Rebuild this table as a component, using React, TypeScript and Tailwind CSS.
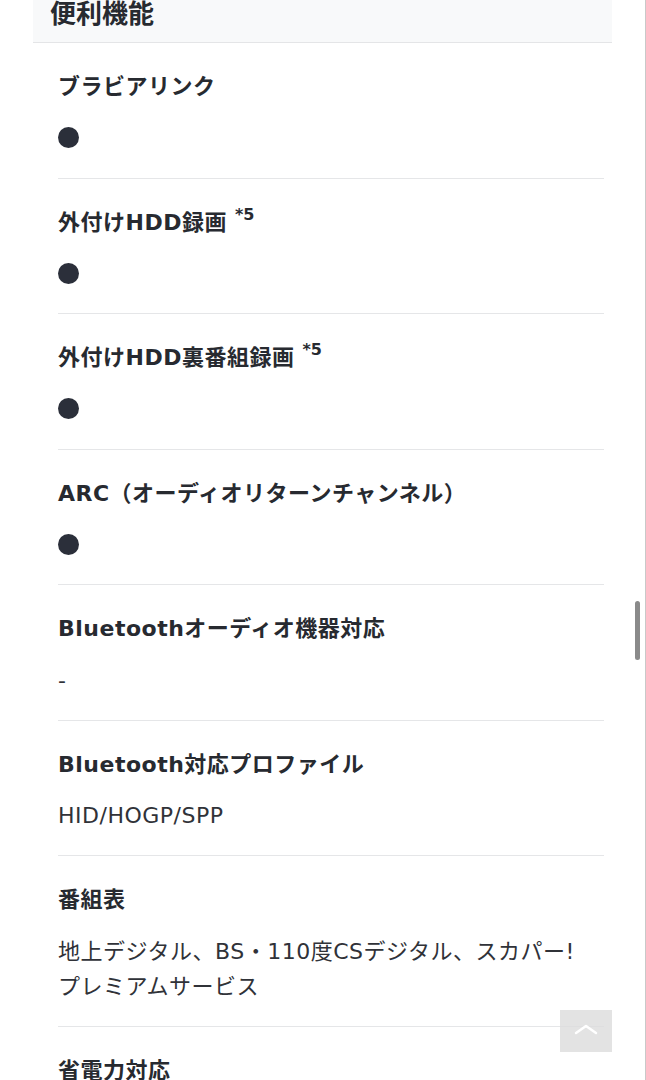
type Spec = {
  label: string;
  note?: string;
  value: string;
};

const specs: Spec[] = [
  { label: "ブラビアリンク", value: "●" },
  { label: "外付けHDD録画", note: "*5", value: "●" },
  { label: "外付けHDD裏番組録画", note: "*5", value: "●" },
  { label: "ARC（オーディオリターンチャンネル）", value: "●" },
  { label: "Bluetoothオーディオ機器対応", value: "-" },
  { label: "Bluetooth対応プロファイル", value: "HID/HOGP/SPP" },
  { label: "番組表", value: "地上デジタル、BS・110度CSデジタル、スカパー! プレミアムサービス" },
  { label: "省電力対応", value: "●" },
];

function SpecRow({ spec }: { spec: Spec }) {
  const isDot = spec.value === "●";
  return (
    <div className="flex flex-col gap-[16.5px] pt-[26px] pb-[22px] border-b border-[#e5e6e8]">
      <div className="text-[22px] leading-[35px] font-bold tracking-[0.5px] text-[#272a30]">
        {spec.label}
        {spec.note && (
          <span className="relative -top-[10px] ml-[8px] text-[16px] leading-none font-bold tracking-normal">{spec.note}</span>
        )}
      </div>
      <div className="text-[22px] leading-[35px] tracking-[0.5px] text-[#303238] break-keep">
        {isDot ? (
          <span className="inline-block align-middle w-[21px] h-[21px] rounded-full bg-[#2b2f3a] -mt-[4px]" aria-label="●" />
        ) : (
          spec.value
        )}
      </div>
    </div>
  );
}

export default function App() {
  return (
    <div
      className="relative h-[1080px] overflow-hidden bg-white border-r border-[#c9c9c9]"
      style={{ fontFamily: '"DejaVu Sans", "Noto Sans CJK JP", sans-serif' }}
    >
      <div className="ml-[33px] w-[579px] flex flex-col">
        <div className="-mt-[4px] pb-[10px] pl-[17px] bg-[#f8f9fa] border-b border-[#e4e5e7]">
          <h2 className="text-[26px] leading-[36px] font-bold text-[#272a30]">便利機能</h2>
        </div>
        <div className="flex flex-col pl-[25px] pr-[8px]">
          {specs.map((s) => (
            <SpecRow key={s.label} spec={s} />
          ))}
        </div>
      </div>

      {/* scroll to top */}
      <button
        className="absolute left-[560px] top-[1010px] w-[52px] h-[42px] bg-[#dcdcdc]/80 flex items-center justify-center"
        aria-label="ページトップへ"
      >
        <svg width="24" height="12" viewBox="0 0 24 12" fill="none" className="-mt-[4px]">
          <polyline points="2,10 12,3 22,10" stroke="white" strokeWidth="2.5" strokeLinecap="round" strokeLinejoin="round" />
        </svg>
      </button>

      {/* scrollbar thumb */}
      <div className="absolute left-[635px] top-[601px] w-[5px] h-[59px] rounded-full bg-[#8a8a8a]" />
    </div>
  );
}
